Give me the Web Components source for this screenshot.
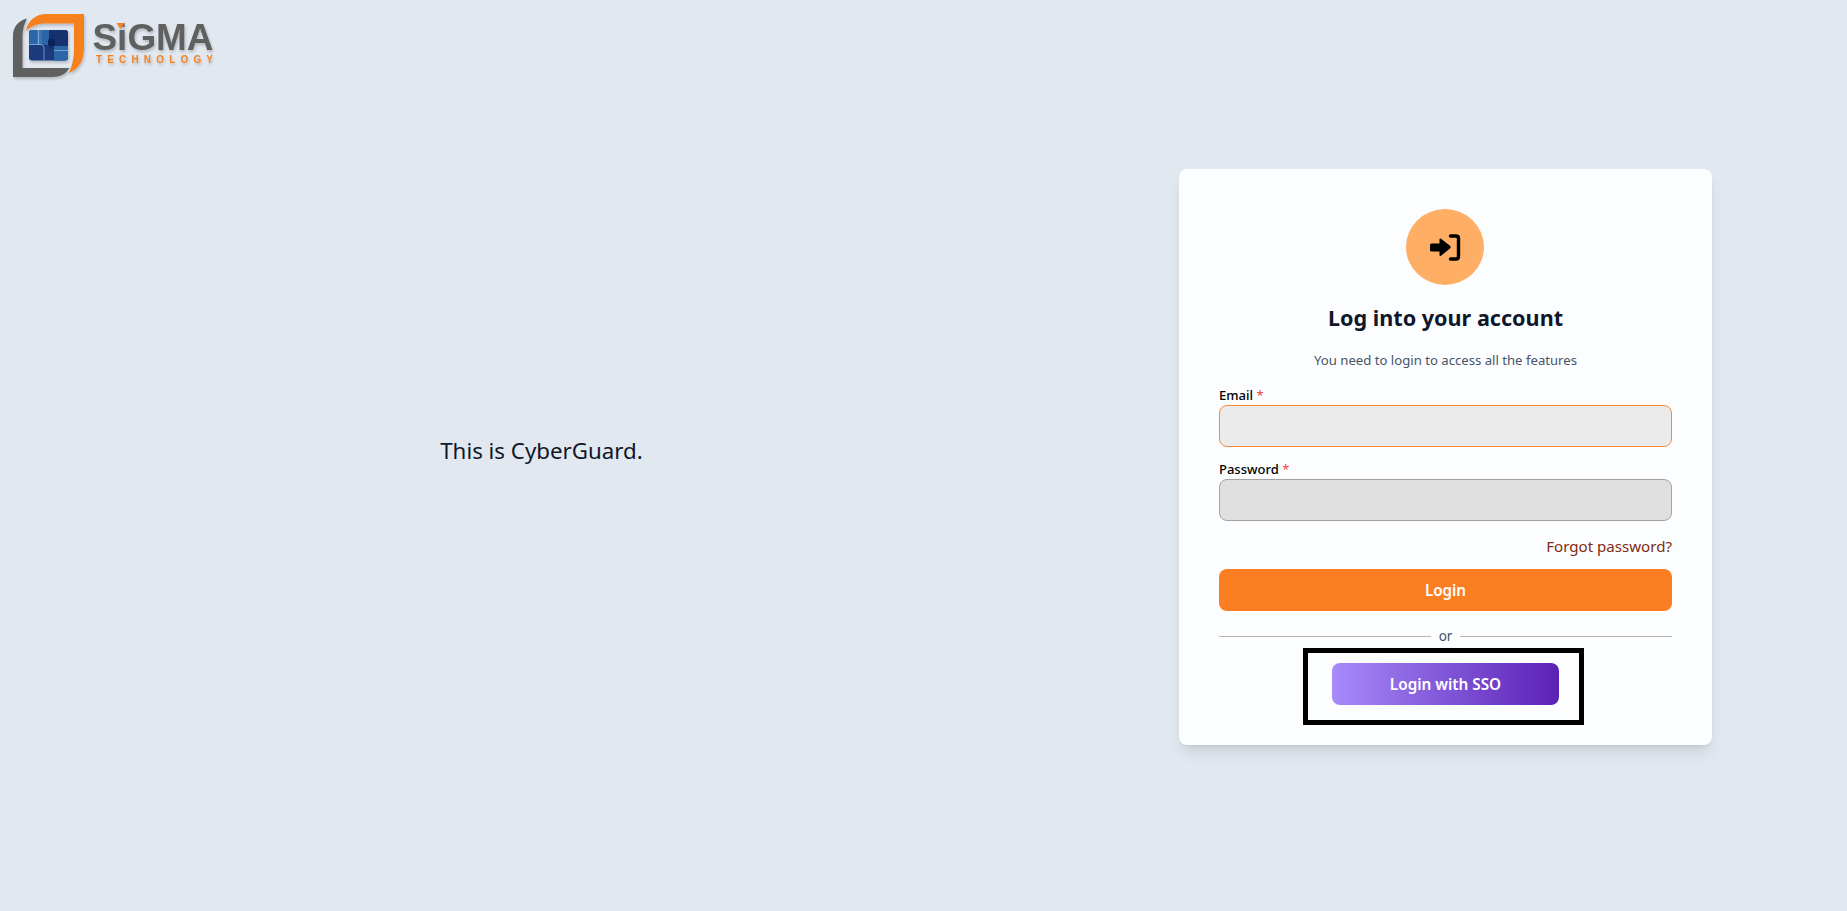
<!DOCTYPE html>
<html lang="en"><head><meta charset="utf-8"><title>CyberGuard</title>
<style>
html,body{margin:0;height:100%;overflow:hidden;background:#e2e8f0}
body{font-family:"Noto Sans","Open Sans",sans-serif;color:#0f172a}
</style></head>
<body>
<cg-page>
  <cg-logo slot="logo"></cg-logo>
  <cg-intro slot="intro">This is CyberGuard.</cg-intro>
  <cg-card slot="card">
    <cg-icon-badge></cg-icon-badge>
    <cg-heading title="Log into your account" sub="You need to login to access all the features"></cg-heading>
    <cg-field label="Email" type="email" variant="focus" style="--mt:15px"></cg-field>
    <cg-field label="Password" type="password" style="--mt:12px"></cg-field>
    <cg-link>Forgot password?</cg-link>
    <cg-button>Login</cg-button>
    <cg-divider>or</cg-divider>
    <cg-sso>Login with SSO</cg-sso>
  </cg-card>
</cg-page>
<script>
function def(name, css, html){
  customElements.define(name, class extends HTMLElement{
    constructor(){super();this.attachShadow({mode:'open'});}
    connectedCallback(){
      this.shadowRoot.innerHTML='<style>'+css+'</style>'+(typeof html==='function'?html(this):html);
    }
  });
}
def('cg-page',`
:host{display:block;height:911px;box-sizing:border-box}
.top{height:90px}
.main{display:grid;grid-template-columns:1083px 1fr;align-items:start;padding-top:79px}
.left{display:flex;justify-content:center;padding-top:268px}
.right{padding-left:96px}
`,`<div class="top"><slot name="logo"></slot></div>
<div class="main"><div class="left"><slot name="intro"></slot></div><div class="right"><slot name="card"></slot></div></div>`);

def('cg-logo',`:host{display:block;width:230px;height:90px}svg{display:block}`,`
<svg width="230" height="90" viewBox="0 0 230 90" role="img" aria-label="Sigma Technology logo">
<defs>
<filter id="b" x="-10%" y="-10%" width="120%" height="120%"><feGaussianBlur stdDeviation=".6"/></filter>
<filter id="s" x="-10%" y="-10%" width="125%" height="130%"><feGaussianBlur in="SourceAlpha" stdDeviation="1.4"/><feOffset dx="1" dy="1.5"/><feComponentTransfer><feFuncA type="linear" slope=".22"/></feComponentTransfer><feMerge><feMergeNode/><feMergeNode in="SourceGraphic"/></feMerge></filter>
<clipPath id="c"><rect x="29" y="30" width="39" height="30.5" rx="3"/></clipPath>
</defs>
<g filter="url(#s)"><g filter="url(#b)">
<path fill="#5f6161" d="M27 18.500C18 21 13 27 13 36V77H52C60 77 66 74 69.500 68H22.500V36C22.500 30 24 24 27 18.500Z"/>
<path fill="#f6811f" d="M26 31C28 20 36 14 47 14H84V48C84 60 79 69 69 73C72 66 74 58 74 50V23.500H46C37 23.500 31 26 26 31Z"/>
<g clip-path="url(#c)">
<rect x="29" y="30" width="39" height="31" fill="#1a3a7e"/>
<rect x="29" y="30" width="20" height="15" fill="#2a66a8"/>
<rect x="37" y="30" width="5" height="15" fill="#3574b4"/>
<rect x="49" y="30" width="19" height="19" fill="#15306e"/>
<rect x="54" y="46" width="14" height="15" fill="#2a66a8"/>
<rect x="48" y="39" width="7" height="7" rx="2" fill="#0d2357"/>
<path d="M29 44.500H40Q44 44.500 44 49V61M38.500 30V44M54 50.500H68" fill="none" stroke="#9db8da" stroke-width=".7"/>
</g>
</g></g>
<g filter="url(#s)">
<text x="92.500" y="50" font-family="Liberation Sans" font-weight="700" font-size="37" fill="#5f6161" textLength="121" lengthAdjust="spacingAndGlyphs" filter="url(#b)">SiGMA</text>
<path d="M116.500 23H124.500L120.500 29Z" fill="#f6811f"/>
<text x="96" y="63" font-family="Liberation Sans" font-weight="700" font-size="10" fill="#f6811f" textLength="117" lengthAdjust="spacing" filter="url(#b)">TECHNOLOGY</text>
</g>
</svg>`);

def('cg-intro',`:host{display:block;font-size:22.300px;line-height:28px;color:#0f172a}`,`<slot></slot>`);

def('cg-card',`:host{display:block;width:533px;height:576px;box-sizing:border-box;padding:40px;background:#fcfdff;border-radius:8px;box-shadow:0 10px 15px -3px rgba(0,0,0,.1),0 4px 6px -4px rgba(0,0,0,.1)}
.col{display:flex;flex-direction:column}`,`<div class="col"><slot></slot></div>`);

def('cg-icon-badge',`:host{display:flex;justify-content:center}
.c{width:78px;height:76px;margin-right:1px;border-radius:50%;background:#ffae66;display:flex;align-items:center;justify-content:center}
svg{display:block}`,`<div class="c"><svg width="32" height="32" viewBox="0 0 32 32" aria-hidden="true">
<path d="M2.500 12.500H10.500V8.500Q10.500 7 12 7.800L21 14.800Q22.300 16.200 21 17.600L12 24.800Q10.500 25.500 10.500 24V20.500H2.500Q1 20.500 1 19V14Q1 12.500 2.500 12.500Z" fill="#000"/>
<path d="M21.500 5H27Q29.500 5 29.500 7.500V25.500Q29.500 28 27 28H21.500" fill="none" stroke="#000" stroke-width="3.400" stroke-linecap="round"/>
</svg></div>`);

def('cg-heading',`:host{display:block;text-align:center}
h1{margin:17px 0 0;font-size:21.600px;line-height:32px;font-weight:700;color:#0f172a}
p{margin:15.500px 0 0;font-size:13.150px;line-height:20.500px;color:#475569}`,
h=>`<h1>${h.getAttribute('title')}</h1><p>${h.getAttribute('sub')}</p>`);

def('cg-field',`:host{display:block;margin-top:var(--mt,14px)}
label{display:block;font-size:13px;line-height:20px;font-weight:500;color:#000;height:20px}
b{font-weight:400;color:#ef4444}
input{display:block;box-sizing:border-box;width:100%;height:42px;border-radius:8px;border:1px solid #a3a3a3;background:#e0e0e0;outline:0;padding:0 12px;margin:0}
input.focus{border-color:#f98a35;background:#ebebeb}`,
h=>`<label>${h.getAttribute('label')} <b>*</b></label><input aria-label="${h.getAttribute('label')}" type="${h.getAttribute('type')}" class="${h.getAttribute('variant')||''}">`);

def('cg-link',`:host{display:block;text-align:right;margin-top:14px;font-size:15.100px;line-height:22px;color:#7c2d12}`,`<slot></slot>`);

def('cg-button',`:host{display:flex;align-items:center;justify-content:center;height:42px;margin-top:12px;border-radius:8px;background:#fb7e22;color:#fff;font-size:15.200px;font-weight:600}`,`<slot></slot>`);

def('cg-divider',`:host{display:flex;align-items:center;gap:8px;height:20px;margin-top:15px;font-size:13.500px;color:#475569}
i{flex:1;height:1px;background:#b8b8b8}`,`<i></i><span><slot></slot></span><i></i>`);

def('cg-sso',`:host{display:flex;justify-content:center;margin-top:2px}
.frame{box-sizing:border-box;width:281px;height:77px;margin-right:4px;border:5px solid #000;display:flex;align-items:flex-start;justify-content:center;padding:10px 0 0 4px}
.b{box-sizing:border-box;width:227px;height:42px;border-radius:8px;background:linear-gradient(90deg,#a78bfa,#5b21b6);color:#fff;font-size:15.300px;font-weight:600;display:flex;align-items:center;justify-content:center}`,
`<div class="frame"><div class="b"><slot></slot></div></div>`);
</script>
</body></html>
